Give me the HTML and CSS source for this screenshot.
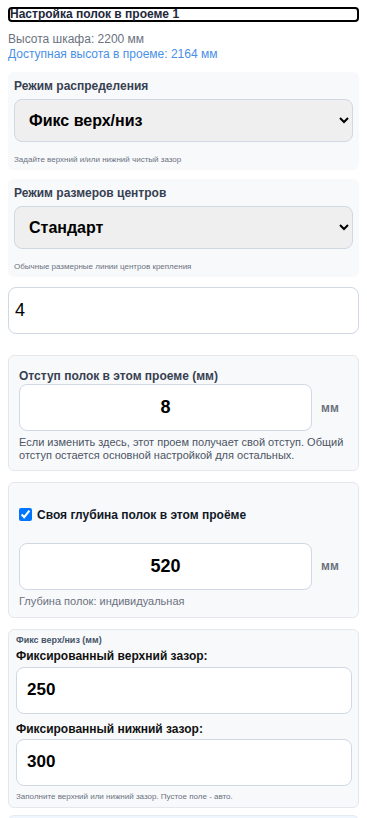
FILE: index.html
```html
<!DOCTYPE html>
<html lang="ru">
<head>
<meta charset="utf-8">
<title>Настройка полок</title>
<link rel="stylesheet" href="styles.css">
</head>
<body>
<div class="panel">
  <div class="title">Настройка полок в проеме 1</div>
  <div class="info">
    <div class="muted">Высота шкафа: 2200 мм</div>
    <div class="accent">Доступная высота в проеме: 2164 мм</div>
  </div>

  <div class="card plain">
    <div class="lbl">Режим распределения</div>
    <select class="sel"><option>Фикс верх/низ</option></select>
    <div class="hint">Задайте верхний и/или нижний чистый зазор</div>
  </div>

  <div class="card plain second">
    <div class="lbl">Режим размеров центров</div>
    <select class="sel"><option>Стандарт</option></select>
    <div class="hint">Обычные размерные линии центров крепления</div>
  </div>

  <input class="count" type="text" value="4">

  <div class="card boxed offset">
    <div class="lbl">Отступ полок в этом проеме (мм)</div>
    <div class="row">
      <input class="num" type="text" value="8">
      <span class="unit">мм</span>
    </div>
    <div class="help">Если изменить здесь, этот проем получает свой отступ. Общий отступ остается основной настройкой для остальных.</div>
  </div>

  <div class="card boxed depth">
    <label class="check"><input type="checkbox" checked><span>Своя глубина полок в этом проёме</span></label>
    <div class="row">
      <input class="num" type="text" value="520">
      <span class="unit">мм</span>
    </div>
    <div class="help">Глубина полок: индивидуальная</div>
  </div>

  <div class="card boxed fixed">
    <div class="sub">Фикс верх/низ (мм)</div>
    <div class="flbl">Фиксированный верхний зазор:</div>
    <input class="gap" type="text" value="250">
    <div class="flbl second-lbl">Фиксированный нижний зазор:</div>
    <input class="gap" type="text" value="300">
    <div class="hint">Заполните верхний или нижний зазор. Пустое поле - авто.</div>
  </div>

  <div class="card next"></div>
</div>
</body>
</html>
```
FILE: styles.css
```css
html, body {
  margin: 0;
  padding: 0;
  background: #ffffff;
}
body {
  padding: 8px;
  font-family: "Liberation Sans", Arial, sans-serif;
  color: #111827;
}
.panel {
  display: flex;
  flex-direction: column;
}
.title {
  margin-top: -1px;
  font-size: 12px;
  font-weight: bold;
  line-height: 11px;
  color: #1e293b;
  border: 2px solid #000;
  border-radius: 4px;
  padding: 0;
}
.info {
  margin-top: 10px;
  font-size: 12px;
  line-height: 15px;
}
.muted { color: #6b7280; }
.accent { color: #4a8fe7; }

.card {
  background: #f8f9fb;
  border-radius: 6px;
  box-sizing: border-box;
  display: flex;
  flex-direction: column;
}
.plain {
  margin-top: 10px;
  padding: 7px 6px 5px;
}
.plain.second { margin-top: 9px; }
.lbl {
  font-size: 12px;
  font-weight: bold;
  line-height: 14px;
  color: #374151;
}
.sel {
  margin-top: 6px;
  height: 43px;
  width: 100%;
  box-sizing: border-box;
  background-color: #efefef;
  border: 1px solid #cfd8e3;
  border-radius: 8px;
  padding: 0 6px 0 10px;
  font-family: "Liberation Sans", Arial, sans-serif;
  font-size: 16px;
  font-weight: bold;
  color: #000;
}
.hint {
  margin-top: 13px;
  font-size: 8px;
  line-height: 10px;
  color: #6b7280;
}
.count {
  margin-top: 10px;
  height: 47px;
  width: 100%;
  box-sizing: border-box;
  border: 1px solid #cfd8e3;
  border-radius: 8px;
  background: #fff;
  padding: 0 6px;
  font-family: "Liberation Sans", Arial, sans-serif;
  font-size: 18px;
  color: #000;
}
.boxed {
  border: 1px solid #e5e7eb;
}
.offset {
  margin-top: 21px;
  padding: 13px 10px 7px;
}
.offset .lbl { margin-bottom: 1px; }
.row {
  display: flex;
  align-items: center;
}
.num {
  flex: 1;
  min-width: 0;
  height: 47px;
  box-sizing: border-box;
  border: 1px solid #cfd8e3;
  border-radius: 8px;
  background: #fff;
  text-align: center;
  font-family: "Liberation Sans", Arial, sans-serif;
  font-size: 18px;
  font-weight: bold;
  color: #000;
  padding: 0 8px;
}
.unit {
  width: 36px;
  flex: none;
  text-align: center;
  font-size: 12px;
  font-weight: bold;
  color: #6b7280;
}
.help {
  margin-top: 5px;
  font-size: 11px;
  line-height: 13.3px;
  color: #4b5563;
}
.depth {
  margin-top: 11px;
  padding: 24px 10px 9px;
}
.depth .help { color: #6b7280; }
.check {
  display: flex;
  align-items: center;
  height: 16px;
  font-size: 12px;
  font-weight: bold;
  color: #111827;
  margin-bottom: 20px;
}
.check input {
  margin: 0 5px 0 0;
  width: 13px;
  height: 13px;
}
.fixed {
  margin-top: 11px;
  padding: 5px 6px 5px 7px;
}
.sub {
  font-size: 9px;
  font-weight: bold;
  line-height: 10px;
  color: #475569;
}
.flbl {
  margin-top: 4px;
  font-size: 12px;
  font-weight: bold;
  line-height: 15px;
  color: #111;
  margin-bottom: 3px;
}
.second-lbl { margin-top: 8px; margin-bottom: 2px; }
.gap {
  height: 47px;
  width: 100%;
  box-sizing: border-box;
  border: 1px solid #cfd8e3;
  border-radius: 8px;
  background: #fff;
  padding: 0 10px;
  font-family: "Liberation Sans", Arial, sans-serif;
  font-size: 17px;
  font-weight: bold;
  color: #000;
}
.fixed .hint { margin-top: 6px; }
.next {
  margin-top: 7px;
  height: 40px;
  background: #f0f6fe;
  border: 1px solid #e3ebf5;
}
```
